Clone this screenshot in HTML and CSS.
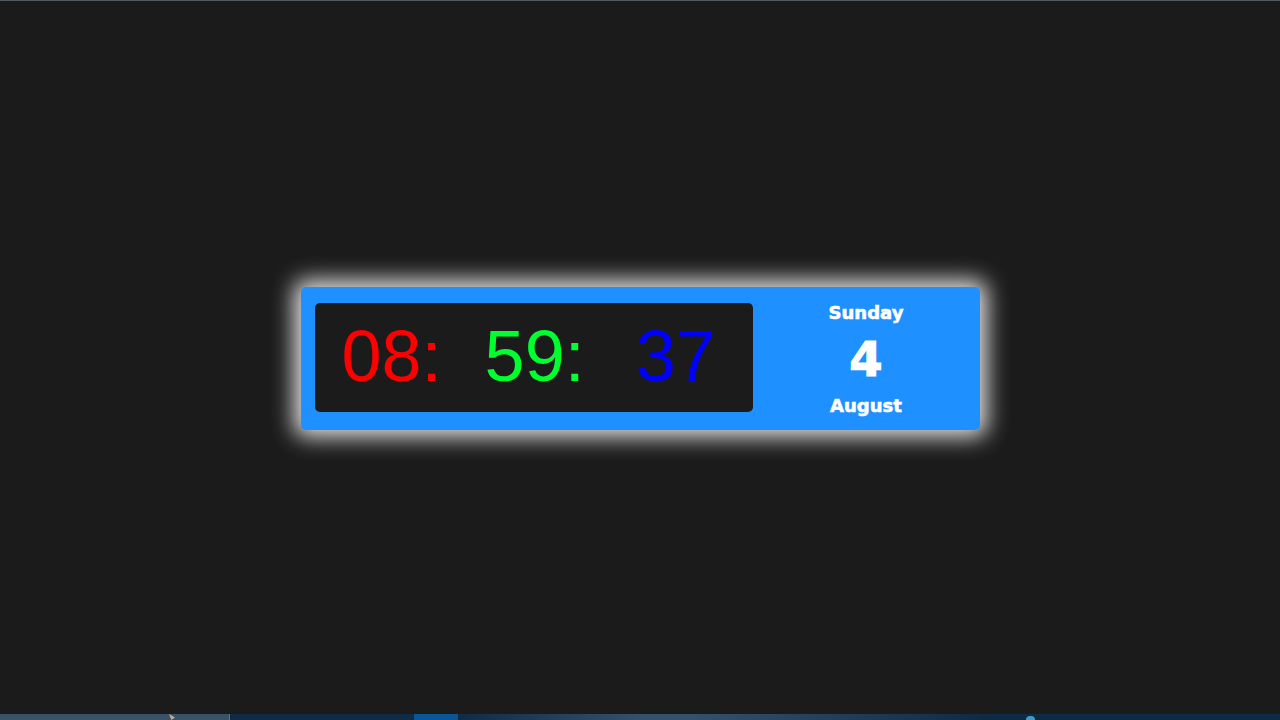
FILE: index.html
```html
<!DOCTYPE html>
<html lang="en">
<head>
<meta charset="utf-8">
<title>Clock</title>
<link rel="stylesheet" href="styles.css">
</head>
<body>
<div class="topline"></div>
<main class="stage">
  <div class="clock">
    <div class="time">
      <span class="hh">08:</span>
      <span class="mm">59:</span>
      <span class="ss">37</span>
    </div>
    <div class="date">
      <div class="day">Sunday</div>
      <div class="num">4</div>
      <div class="month">August</div>
    </div>
  </div>
</main>
<div class="taskbar">
  <div class="tb-start"><span class="cursor"></span></div>
  <div class="tb-navy"></div>
  <div class="tb-active"></div>
  <div class="tb-grad"></div>
  <div class="tb-tray"><span class="tray-icon"></span></div>
</div>
</body>
</html>
```
FILE: styles.css
```css
* { box-sizing: border-box; }
html, body { margin: 0; padding: 0; }
body {
  width: 1280px;
  height: 720px;
  background: #1b1b1b;
  display: flex;
  flex-direction: column;
  overflow: hidden;
}
.topline {
  height: 1px;
  background: #4e5961;
  flex: none;
}
.stage {
  flex: 1;
  display: flex;
  align-items: center;
  justify-content: center;
  padding-top: 2px;
}
.clock {
  width: 679px;
  height: 143px;
  background: #1e90ff;
  border-radius: 5px;
  box-shadow: 0 0 22px 7px rgba(255, 255, 255, 0.88);
  display: flex;
  padding: 16px 0 18px 14px;
}
.time {
  width: 438px;
  height: 109px;
  background: #1b1b1b;
  border-radius: 5px;
  display: flex;
  align-items: flex-start;
  padding: 17px 0 0 27px;
  font-family: "Liberation Sans", Arial, sans-serif;
  font-size: 72px;
  line-height: 72px;
}
.hh { color: #ff0000; }
.mm { color: #00ff2e; margin-left: 43px; }
.ss { color: #0000ff; margin-left: 51px; }
.date {
  width: 227px;
  margin-top: -1px;
  display: flex;
  flex-direction: column;
  align-items: center;
  gap: 12px;
  color: #ffffff;
  font-family: "DejaVu Sans", sans-serif;
  font-weight: bold;
  -webkit-text-stroke: 0.6px #ffffff;
}
.day, .month {
  font-size: 18px;
  line-height: 21px;
}
.num {
  font-size: 48px;
  line-height: 48px;
  -webkit-text-stroke: 1.2px #ffffff;
}
.taskbar {
  height: 6px;
  flex: none;
  display: flex;
}
.tb-start {
  width: 230px;
  background: #3a5268;
  border-right: 1px solid #5a6f82;
  position: relative;
}
.cursor {
  position: absolute;
  left: 169px;
  top: 0;
  width: 6px;
  height: 6px;
  background: #c8a890;
  clip-path: polygon(0 0, 100% 60%, 40% 100%);
}
.tb-navy {
  width: 184px;
  background: #0f2b46;
}
.tb-active {
  width: 44px;
  background: #0a5596;
}
.tb-grad {
  width: 522px;
  background: linear-gradient(90deg, #0f2b46 0%, #34516b 35%, #34516b 45%, #0f2b46 100%);
}
.tb-tray {
  flex: 1;
  background: #0d2a47;
  position: relative;
}
.tray-icon {
  position: absolute;
  left: 46px;
  top: 2px;
  width: 9px;
  height: 4px;
  border-radius: 4px 4px 0 0;
  background: #3a9cc8;
}
```
